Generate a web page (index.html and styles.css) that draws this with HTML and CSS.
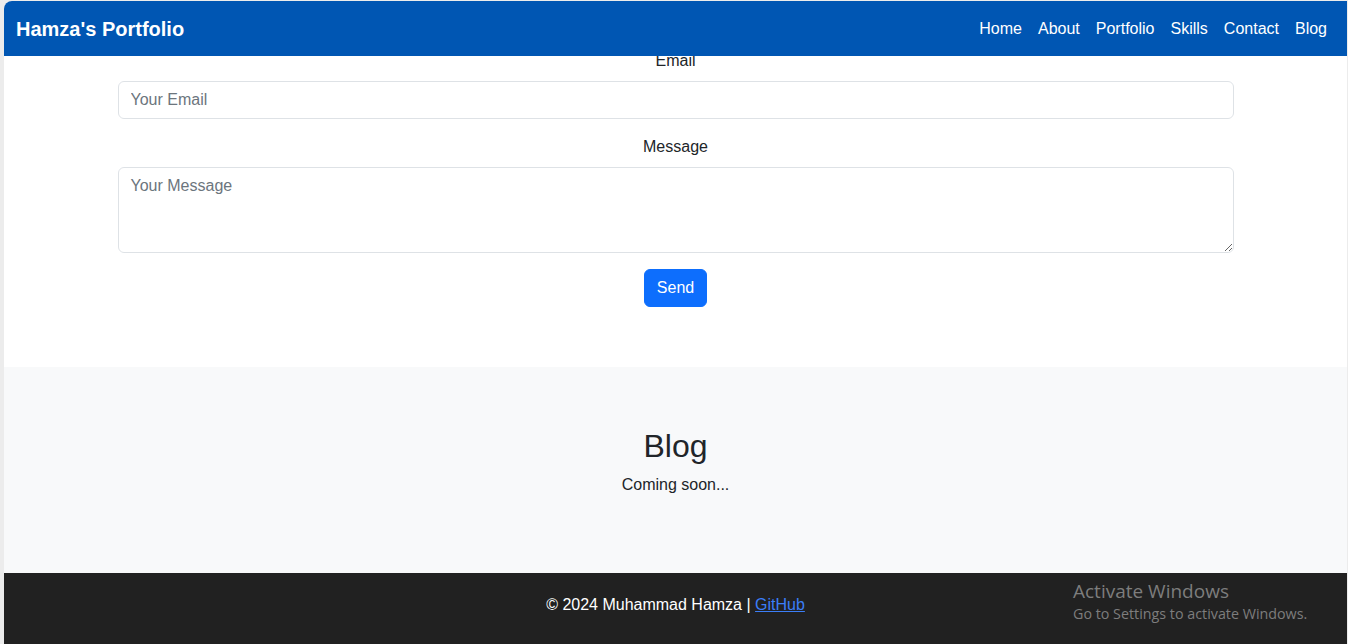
FILE: index.html
```html
<!DOCTYPE html>
<html lang="en">
<head>
<meta charset="utf-8">
<title>Hamza's Portfolio</title>
<link rel="stylesheet" href="styles.css">
</head>
<body>
<div class="viewport">
  <nav class="navbar">
    <a class="brand" href="#">Hamza's Portfolio</a>
    <ul class="nav-links">
      <li><a href="#">Home</a></li>
      <li><a href="#">About</a></li>
      <li><a href="#">Portfolio</a></li>
      <li><a href="#">Skills</a></li>
      <li><a href="#">Contact</a></li>
      <li><a href="#">Blog</a></li>
    </ul>
  </nav>

  <section class="contact">
    <div class="container">
      <form class="form">
        <div class="field">
          <label class="label" for="email">Email</label>
          <input class="control" id="email" type="email" placeholder="Your Email">
        </div>
        <div class="field">
          <label class="label" for="msg">Message</label>
          <textarea class="control textarea" id="msg" rows="3" placeholder="Your Message"></textarea>
        </div>
        <div class="actions">
          <button class="btn" type="button">Send</button>
        </div>
      </form>
    </div>
  </section>

  <section class="blog">
    <h2 class="blog-title">Blog</h2>
    <p class="blog-text">Coming soon...</p>
  </section>

  <footer class="footer">
    <p>&copy; 2024 Muhammad Hamza | <a href="#">GitHub</a></p>
  </footer>

  <div class="watermark">
    <div class="wm-title">Activate Windows</div>
    <div class="wm-sub">Go to Settings to activate Windows.</div>
  </div>
</div>
</body>
</html>
```

FILE: styles.css
```css
* { box-sizing: border-box; }

html, body {
  margin: 0;
  padding: 0;
  height: 100%;
  overflow: hidden;
}

body {
  background: #ececec;
  font-family: "Liberation Sans", Arial, sans-serif;
  font-size: 16px;
  line-height: 1.5;
  color: #212529;
  padding: 1px 1px 0 4px;
}

.viewport {
  position: relative;
  height: 643px;
  background: #fff;
  border-top-left-radius: 8px;
  overflow: hidden;
}

.navbar {
  position: absolute;
  top: 0;
  left: 0;
  right: 0;
  height: 55px;
  background: #0056b3;
  display: flex;
  align-items: center;
  justify-content: space-between;
  padding: 0 12px;
  z-index: 10;
}

.brand {
  color: #fff;
  font-weight: bold;
  font-size: 20px;
  text-decoration: none;
  line-height: 30px;
}

.nav-links {
  list-style: none;
  margin: 0;
  padding: 0;
  display: flex;
}

.nav-links a {
  display: block;
  color: #fff;
  text-decoration: none;
  padding: 8px 8px;
  font-size: 16px;
  line-height: 24px;
}

.contact {
  background: #fff;
  padding: 48px 0 60px;
}

.container {
  width: 1140px;
  margin: 0 auto;
  padding: 0 12px;
}

.field {
  margin-bottom: 16px;
  text-align: center;
}

.label {
  display: block;
  margin-bottom: 8px;
  line-height: 24px;
}

.control {
  display: block;
  width: 100%;
  padding: 6px 12px;
  font-family: inherit;
  font-size: 16px;
  line-height: 24px;
  color: #212529;
  background: #fff;
  border: 1px solid #dee2e6;
  border-radius: 6px;
  text-align: left;
}

.control::placeholder {
  color: #6c757d;
}

.textarea {
  height: 86px;
  resize: vertical;
}

.actions {
  text-align: center;
}

.btn {
  display: inline-block;
  font-family: inherit;
  font-size: 16px;
  line-height: 24px;
  padding: 6px 12px;
  color: #fff;
  background: #0d6efd;
  border: 1px solid #0d6efd;
  border-radius: 6px;
  cursor: pointer;
}

.blog {
  background: #f8f9fa;
  padding: 60px 0;
  text-align: center;
}

.blog-title {
  margin: 0 0 8px;
  font-size: 32px;
  font-weight: 500;
  line-height: 1.2;
}

.blog-text {
  margin: 0 0 16px;
}

.footer {
  background: #212121;
  color: #fff;
  text-align: center;
  padding: 20px 0;
  height: 80px;
}

.footer p {
  margin: 0;
}

.footer a {
  color: #3b7ef8;
  text-decoration: underline;
}

.watermark {
  position: absolute;
  left: 1069px;
  top: 577px;
  font-family: "Open Sans", "Noto Sans", sans-serif;
  color: #7d7d7d;
  z-index: 20;
}

.wm-title {
  font-size: 19px;
  line-height: 26px;
}

.wm-sub {
  font-size: 14.3px;
  line-height: 20px;
}
```
